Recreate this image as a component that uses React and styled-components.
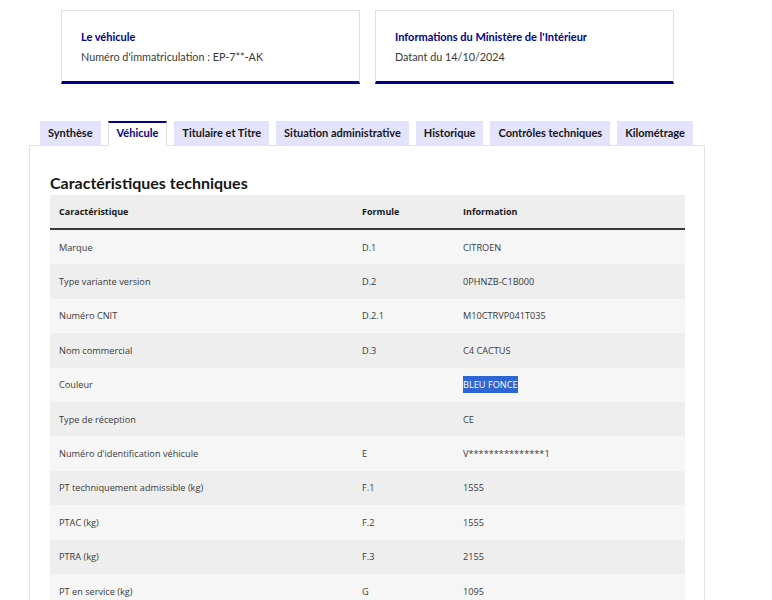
import React from 'react';
import styled, { createGlobalStyle } from 'styled-components';

const GlobalStyle = createGlobalStyle`
	body {
		margin: 0;
		background: #fff;
		font-family: Lato, "Noto Sans", sans-serif;
		color: #161616;
	}
	::selection {
		background: #2f66d6;
		color: #fff;
	}
`;

const Page = styled.div`
	padding-top: 10px;
	width: 772px;
`;

const CardRow = styled.div`
	display: flex;
	gap: 15px;
	padding-left: 61px;
`;

const Card = styled.div`
	box-sizing: border-box;
	width: 299px;
	height: 74px;
	border: 1px solid #e0e0e0;
	border-bottom: 3px solid #000091;
	padding: 19px 19px 0;
	display: flex;
	flex-direction: column;
	gap: 6px;
`;

const CardTitle = styled.div`
	font-size: 11px;
	font-weight: 700;
	color: #000091;
	line-height: 14px;
`;

const CardText = styled.div`
	font-size: 10.8px;
	color: #3a3a3a;
	line-height: 14px;
`;

const TabsWrap = styled.div`
	margin: 37px 0 0 29px;
	width: 676px;
`;

const TabList = styled.div`
	display: flex;
	align-items: flex-start;
	gap: 7px;
	padding-left: 11px;
	height: 24px;
	position: relative;
	z-index: 1;
`;

const Tab = styled.div`
	box-sizing: border-box;
	height: ${(p) => (p.$active ? '25px' : '24px')};
	padding: 0 8px ${(p) => (p.$active ? '4px' : '2px')};
	display: flex;
	align-items: center;
	font-size: 11px;
	font-weight: 700;
	white-space: nowrap;
	background: ${(p) => (p.$active ? '#fff' : '#e3e3fd')};
	color: ${(p) => (p.$active ? '#000091' : '#161616')};
	border-top: ${(p) => (p.$active ? '2px solid #000091' : 'none')};
	border-left: ${(p) => (p.$active ? '1px solid #ddd' : 'none')};
	border-right: ${(p) => (p.$active ? '1px solid #ddd' : 'none')};
`;

const Panel = styled.div`
	border: 1px solid #e3e3e3;
	border-bottom: none;
	padding: 25px 19px 0 20px;
	height: 460px;
	box-sizing: border-box;
`;

const Heading = styled.h2`
	margin: 0;
	font-size: 16px;
	font-weight: 700;
	line-height: 24px;
	color: #161616;
`;

const Table = styled.table`
	width: 635px;
	border-collapse: collapse;
	table-layout: fixed;
	font-family: "Open Sans", sans-serif;
	font-size: 9.2px;
`;

const HeadCell = styled.th`
	box-sizing: border-box;
	height: 34px;
	padding: 0 0 0 9px;
	text-align: left;
	font-size: 9px;
	font-weight: 700;
	color: #161616;
	background: #eeeeee;
	border-bottom: 2px solid #3a3a3a;
	width: ${(p) => p.$w}px;
`;

const Row = styled.tr`
	background: ${(p) => (p.$odd ? '#f6f6f6' : '#eeeeee')};
`;

const Cell = styled.td`
	height: 34.4px;
	padding: 0 0 0 9px;
	color: #3a3a3a;
	white-space: nowrap;
`;

const Selected = styled.span`
	background: #2f66d6;
	color: #fff;
	padding: 2px 0;
`;

const tabs = [
	'Synthèse',
	'Véhicule',
	'Titulaire et Titre',
	'Situation administrative',
	'Historique',
	'Contrôles techniques',
	'Kilométrage',
];

const rows = [
	['Marque', 'D.1', 'CITROEN'],
	['Type variante version', 'D.2', '0PHNZB-C1B000'],
	['Numéro CNIT', 'D.2.1', 'M10CTRVP041T035'],
	['Nom commercial', 'D.3', 'C4 CACTUS'],
	['Couleur', '', 'BLEU FONCE', true],
	['Type de réception', '', 'CE'],
	["Numéro d'identification véhicule", 'E', 'V***************1'],
	['PT techniquement admissible (kg)', 'F.1', '1555'],
	['PTAC (kg)', 'F.2', '1555'],
	['PTRA (kg)', 'F.3', '2155'],
	['PT en service (kg)', 'G', '1095'],
];

export default function App() {
	return (
		<>
			<GlobalStyle />
			<Page>
				<CardRow>
					<Card>
						<CardTitle>Le véhicule</CardTitle>
						<CardText>Numéro d'immatriculation : EP-7**-AK</CardText>
					</Card>
					<Card>
						<CardTitle>Informations du Ministère de l'Intérieur</CardTitle>
						<CardText>Datant du 14/10/2024</CardText>
					</Card>
				</CardRow>

				<TabsWrap>
					<TabList>
						{tabs.map((t) => (
							<Tab key={t} $active={t === 'Véhicule'}>
								{t}
							</Tab>
						))}
					</TabList>
					<Panel>
						<Heading>Caractéristiques techniques</Heading>
						<Table>
							<thead>
								<tr>
									<HeadCell $w={303}>Caractéristique</HeadCell>
									<HeadCell $w={101}>Formule</HeadCell>
									<HeadCell $w={231}>Information</HeadCell>
								</tr>
							</thead>
							<tbody>
								{rows.map(([name, code, value, sel], i) => (
									<Row key={name} $odd={i % 2 === 0}>
										<Cell>{name}</Cell>
										<Cell>{code}</Cell>
										<Cell>{sel ? <Selected>{value}</Selected> : value}</Cell>
									</Row>
								))}
							</tbody>
						</Table>
					</Panel>
				</TabsWrap>
			</Page>
		</>
	);
}
